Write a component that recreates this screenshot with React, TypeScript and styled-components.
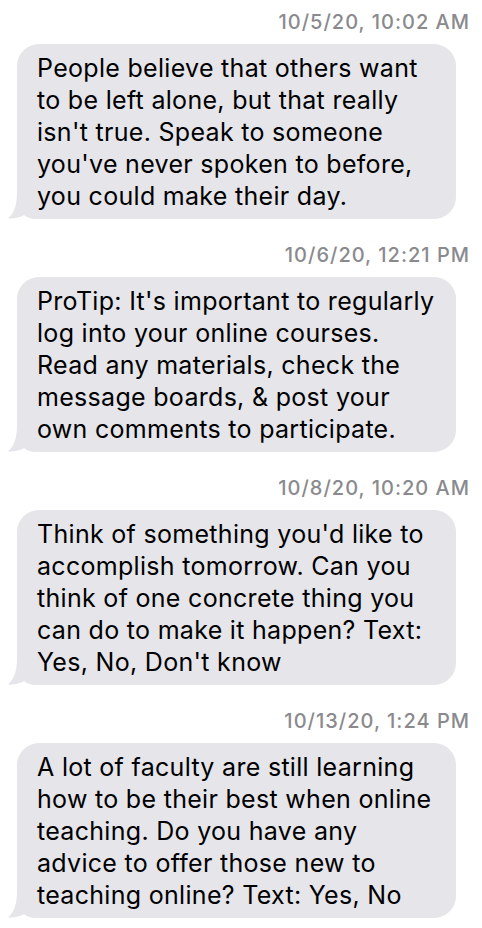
import * as React from "react";
import styled, { createGlobalStyle } from "styled-components";

const GlobalStyle = createGlobalStyle`
  html, body {
    margin: 0;
    padding: 0;
    background: #ffffff;
  }
  body {
    font-family: Inter, "Liberation Sans", Arial, sans-serif;
    -webkit-font-smoothing: antialiased;
  }
`;

interface IMessage {
  time: string;
  text: string;
}

const messages: IMessage[] = [
  {
    time: "10/5/20, 10:02 AM",
    text: "People believe that others want to be left alone, but that really isn't true. Speak to someone you've never spoken to before, you could make their day."
  },
  {
    time: "10/6/20, 12:21 PM",
    text: "ProTip: It's important to regularly log into your online courses. Read any materials, check the message boards, & post your own comments to participate."
  },
  {
    time: "10/8/20, 10:20 AM",
    text: "Think of something you'd like to accomplish tomorrow. Can you think of one concrete thing you can do to make it happen? Text: Yes, No, Don't know"
  },
  {
    time: "10/13/20, 1:24 PM",
    text: "A lot of faculty are still learning how to be their best when online teaching. Do you have any advice to offer those new to teaching online? Text: Yes, No"
  }
];

const Thread = styled.div`
  width: 482px;
  display: flex;
  flex-direction: column;
`;

const Group = styled.div`
  display: flex;
  flex-direction: column;
`;

const Timestamp = styled.div<{ $first?: boolean }>`
  height: 44px;
  margin-top: ${(p) => (p.$first ? "0" : "14px")};
  padding-right: 12px;
  display: flex;
  align-items: center;
  justify-content: flex-end;
  font-size: 20px;
  font-weight: 500;
  color: #8a8a8e;
  letter-spacing: 1px;
`;

const Bubble = styled.div`
  position: relative;
  box-sizing: border-box;
  width: 439px;
  margin-left: 17px;
  padding: 8px 18px 7px 20px;
  background: #e5e5ea;
  border-radius: 22px;
  font-size: 25px;
  line-height: 32px;
  letter-spacing: 0.3px;
  color: #000000;
`;

const Tail = styled.svg`
  position: absolute;
  left: -9px;
  bottom: 0;
  width: 28px;
  height: 26px;
`;

const BubbleTail = () => (
  <Tail viewBox="0 0 28 26">
    <path
      d="M9,0 C9,12 6,20 0,25.5 C6,26 12,24.5 16,22 C19,24.8 23,26 28,26 L28,0 Z"
      fill="#e5e5ea"
    />
  </Tail>
);

export default function App() {
  return (
    <Thread>
      <GlobalStyle />
      {messages.map((m, i) => (
        <Group key={m.time}>
          <Timestamp $first={i === 0}>{m.time}</Timestamp>
          <Bubble>
            {m.text}
            <BubbleTail />
          </Bubble>
        </Group>
      ))}
    </Thread>
  );
}
